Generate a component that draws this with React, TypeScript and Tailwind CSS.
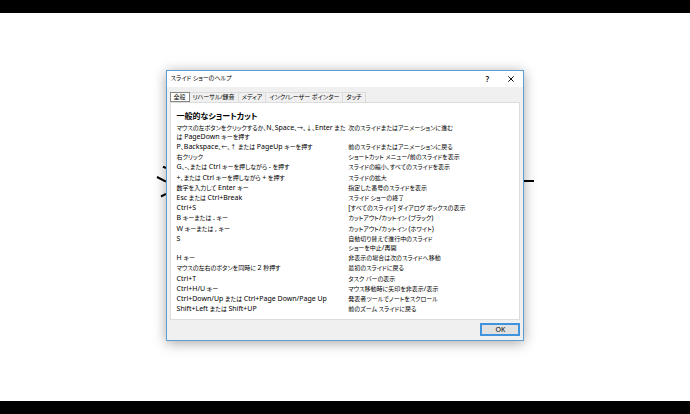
import React, { useState } from "react";

const tabs = ["全般", "リハーサル/録音", "メディア", "インク/レーザー ポインター", "タッチ"];

const shortcuts = [
  {
    id: 1,
    keys: ["マウスの左ボタンをクリックするか、N、Space、→、↓、Enter また", "は PageDown キーを押す"],
    action: ["次のスライドまたはアニメーションに進む"],
  },
  { id: 2, keys: ["P、Backspace、←、↑ または PageUp キーを押す"], action: ["前のスライドまたはアニメーションに戻る"] },
  { id: 3, keys: ["右クリック"], action: ["ショートカット メニュー/前のスライドを表示"] },
  { id: 4, keys: ["G、-、または Ctrl キーを押しながら - を押す"], action: ["スライドの縮小、すべてのスライドを表示"] },
  { id: 5, keys: ["+、または Ctrl キーを押しながら + を押す"], action: ["スライドの拡大"] },
  { id: 6, keys: ["数字を入力して Enter キー"], action: ["指定した番号のスライドを表示"] },
  { id: 7, keys: ["Esc または Ctrl+Break"], action: ["スライド ショーの終了"] },
  { id: 8, keys: ["Ctrl+S"], action: ["[すべてのスライド] ダイアログ ボックスの表示"] },
  { id: 9, keys: ["B キーまたは . キー"], action: ["カットアウト/カットイン (ブラック)"] },
  { id: 10, keys: ["W キーまたは , キー"], action: ["カットアウト/カットイン (ホワイト)"] },
  { id: 11, keys: ["S"], action: ["自動切り替えで進行中のスライド", "ショーを中止/再開"] },
  { id: 12, keys: ["H キー"], action: ["非表示の場合は次のスライドへ移動"] },
  { id: 13, keys: ["マウスの左右のボタンを同時に 2 秒押す"], action: ["最初のスライドに戻る"] },
  { id: 14, keys: ["Ctrl+T"], action: ["タスク バーの表示"] },
  { id: 15, keys: ["Ctrl+H/U キー"], action: ["マウス移動時に矢印を非表示/表示"] },
  { id: 16, keys: ["Ctrl+Down/Up または Ctrl+Page Down/Page Up"], action: ["発表者ツールでノートをスクロール"] },
  { id: 17, keys: ["Shift+Left または Shift+UP"], action: ["前のズーム スライドに戻る"] },
];

// key names are set one size larger than the Japanese around them
const Lines = ({ lines }: { lines: string[] }) => (
  <>
    {lines.map((line) => (
      <span key={line} className="block h-[9px] whitespace-nowrap">
        {line.split(/([!-~](?:[ -~]*[!-~])?)/).map((part, i) =>
          i % 2 === 1 ? (
            <span key={i} className="text-[7px] leading-[7px]">
              {part}
            </span>
          ) : (
            part
          )
        )}
      </span>
    ))}
  </>
);

const HelpDialog = () => {
  const [active, setActive] = useState(0);
  return (
    <div
      role="dialog"
      aria-labelledby="help-title"
      className="relative border border-[#5a9fd4] bg-[#f0f0f0] shadow-[0_2px_12px_rgba(0,0,0,0.35)]"
    >
      <div className="flex items-center justify-between bg-white pl-1 h-4">
        <h1 id="help-title" className="text-[6px]">
          スライド ショーのヘルプ
        </h1>
        <div className="flex">
          <button aria-label="ヘルプ" className="w-6 text-[8px] font-semibold leading-4">
            ?
          </button>
          <button aria-label="閉じる" className="flex w-6 items-center justify-center">
            <svg viewBox="0 0 6 6" className="h-[6px] w-[6px]" stroke="#111" strokeWidth="1">
              <path d="M.3 .3L5.7 5.7M5.7 .3L.3 5.7" />
            </svg>
          </button>
        </div>
      </div>

      <div className="px-[3px] pt-[5px] pb-1">
        <div role="tablist" className="flex items-end">
          {tabs.map((tab, i) => (
            <button
              key={tab}
              role="tab"
              aria-selected={active === i}
              onClick={() => setActive(i)}
              className="h-[10px] border border-b-0 border-l-0 border-[#dcdcdc] px-[3px] text-[6px] leading-[9px] whitespace-nowrap aria-selected:border aria-selected:border-[#888] aria-selected:bg-white"
            >
              {tab}
            </button>
          ))}
        </div>

        <div role="tabpanel" className="border border-[#dcdcdc] bg-white px-[6px] pt-[7px] pb-[3px]">
          <h2 className="text-[8px] leading-[11px] font-bold">一般的なショートカット</h2>
          <table className="mt-[3px] h-[192px] w-full table-fixed text-left text-[6px] leading-[9px]">
            <tbody>
              {shortcuts.map((item) => (
                <tr key={item.id} className="align-top">
                  <th scope="row" className="w-[51%] pb-px font-normal">
                    <Lines lines={item.keys} />
                  </th>
                  <td className="pb-px">
                    <Lines lines={item.action} />
                  </td>
                </tr>
              ))}
            </tbody>
          </table>
        </div>

        <div className="flex justify-end pt-[3px]">
          <button className="h-[13px] w-10 border-2 border-[#3f94dd] bg-[#e1e1e1] text-[7px] leading-[9px]">
            OK
          </button>
        </div>
      </div>
    </div>
  );
};

const App = () => {
  return (
    <div className="flex min-h-screen flex-col bg-white font-['Noto_Sans','Noto_Sans_CJK_JP',sans-serif] text-black [font-feature-settings:'palt']">
      <div className="h-[13px] bg-black" />
      <main className="flex flex-1 items-center justify-center pb-1">
        <div className="relative w-[52%]">
          {/* slide lettering that sticks out from behind the dialog */}
          <svg
            className="absolute top-24 right-full h-8 w-[10px]"
            viewBox="0 0 10 32"
            fill="none"
            stroke="#000"
            strokeWidth="2"
          >
            <path d="M7 .5L10 2M1 11L10 15.5M5 30.5L10 28" />
          </svg>
          <div className="absolute top-[110px] left-full h-[2px] w-[10px] bg-black" />
          <HelpDialog />
        </div>
      </main>
      <div className="h-[13px] bg-black" />
    </div>
  );
};

export default App;
